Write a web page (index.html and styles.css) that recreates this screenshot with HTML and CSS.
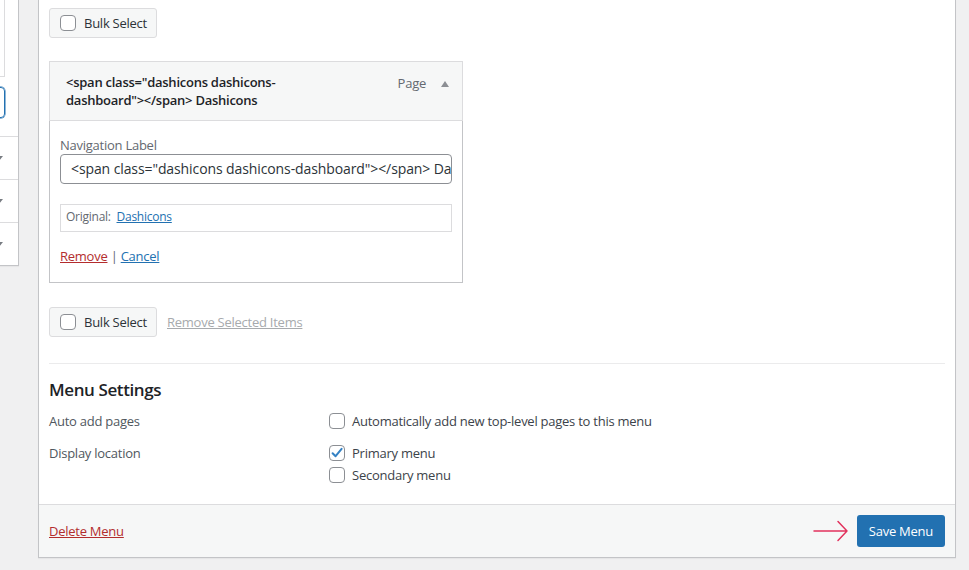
FILE: index.html
```html
<!DOCTYPE html>
<html>
<head>
<meta charset="utf-8">
<link rel="stylesheet" href="styles.css">
</head>
<body>
<div class="page">
  <aside class="side">
    <div class="side-list"></div>
    <div class="side-search"></div>
    <div class="side-rows">
      <div class="side-row"><span class="side-tri"></span></div>
      <div class="side-row"><span class="side-tri"></span></div>
      <div class="side-row"><span class="side-tri"></span></div>
    </div>
  </aside>
  <main class="panel">
    <div class="panel-body">
      <div class="bulk-row bulk-top">
        <label class="btn"><span class="cb"></span>Bulk Select</label>
      </div>
      <div class="item">
        <div class="item-handle">
          <span class="item-title">&lt;span class="dashicons dashicons-dashboard"&gt;&lt;/span&gt; Dashicons</span>
          <span class="item-type">Page</span>
          <span class="item-tri"></span>
        </div>
        <div class="item-settings">
          <div class="field-label">Navigation Label</div>
          <div class="text-input">&lt;span class="dashicons dashicons-dashboard"&gt;&lt;/span&gt; Dashicons</div>
          <div class="original">Original:&nbsp; <a class="link" href="#">Dashicons</a></div>
          <div class="actions"><a class="link-red" href="#">Remove</a> <span class="sep">|</span> <a class="link" href="#">Cancel</a></div>
        </div>
      </div>
      <div class="bulk-row bulk-bottom">
        <label class="btn"><span class="cb"></span>Bulk Select</label>
        <a class="link-muted" href="#">Remove Selected Items</a>
      </div>
      <section class="settings">
        <h3 class="settings-title">Menu Settings</h3>
        <div class="settings-group">
          <div class="group-name">Auto add pages</div>
          <div class="group-input">
            <div class="check-line"><span class="cb"></span>Automatically add new top-level pages to this menu</div>
          </div>
        </div>
        <div class="settings-group">
          <div class="group-name">Display location</div>
          <div class="group-input">
            <div class="check-line"><span class="cb checked"><svg viewBox="0 0 16 16" width="16" height="16"><path d="M3.6 8.2 L6.6 11.2 L12.6 3.8" fill="none" stroke="#3582c4" stroke-width="2" stroke-linecap="round" stroke-linejoin="round"/></svg></span>Primary menu</div>
            <div class="check-line"><span class="cb"></span>Secondary menu</div>
          </div>
        </div>
      </section>
    </div>
    <div class="panel-footer">
      <a class="link-red" href="#">Delete Menu</a>
      <div class="save-wrap">
        <svg class="arrow" width="36" height="22" viewBox="0 0 36 22"><path d="M1 11 H34 M25 1.5 L34 11 L25 20.5" fill="none" stroke="#e2325d" stroke-width="1.5" stroke-linecap="round" stroke-linejoin="round"/></svg>
        <span class="btn-primary">Save Menu</span>
      </div>
    </div>
  </main>
</div>
</body>
</html>
```
FILE: styles.css
```css
* { box-sizing: border-box; }
html, body { margin: 0; padding: 0; }
body {
  background: #f0f0f1;
  font-family: "Open Sans", "Noto Sans", sans-serif;
  font-size: 13px;
  letter-spacing: -0.25px;
  color: #3c434a;
  width: 969px;
  height: 570px;
  overflow: hidden;
}
.page {
  display: flex;
  align-items: flex-start;
  gap: 19px;
}
.side {
  width: 19px;
  height: 266px;
  background: #fff;
  border-right: 1px solid #c3c4c7;
  border-bottom: 1px solid #c3c4c7;
  box-shadow: 0 1px 1px rgba(0,0,0,.04);
  overflow: hidden;
  display: flex;
  flex-direction: column;
}
.side-list {
  width: 200px;
  margin-left: -195px;
  height: 77px;
  border: 1px solid #dcdcde;
  border-top: none;
  flex: none;
}
.side-search {
  width: 200px;
  margin-left: -195px;
  margin-top: 10px;
  height: 31px;
  border: 1px solid #2271b1;
  border-radius: 4px;
  box-shadow: 0 0 0 0.5px #2271b1;
  flex: none;
}
.side-rows { margin-top: 18px; }
.side-row {
  height: 43px;
  border-top: 1px solid #dcdcde;
  display: flex;
  align-items: center;
}
.side-row:last-child { height: 44px; }
.side-tri {
  width: 0; height: 0;
  margin-left: -5px;
  border-left: 4px solid transparent;
  border-right: 4px solid transparent;
  border-top: 5px solid #787c82;
}
.panel {
  width: 918px;
  background: #fff;
  border: 1px solid #c3c4c7;
  border-top: none;
  box-shadow: 0 1px 1px rgba(0,0,0,.04);
}
.panel-body { padding: 8px 10px 0; }
.bulk-row { display: flex; align-items: center; gap: 10px; }
.btn {
  display: inline-flex;
  align-items: center;
  height: 30px;
  padding: 0 0 0 10px;
  background: #f6f7f7;
  border: 1px solid #dcdcde;
  border-radius: 3px;
  color: #2c3338;
  font-size: 13px;
  width: 108px;
  white-space: nowrap;
}
.cb {
  width: 16px; height: 16px;
  border: 1px solid #8c8f94;
  border-radius: 4px;
  background: #fff;
  margin-right: 8px;
  flex: none;
  display: inline-flex;
  align-items: center;
  justify-content: center;
}
.cb svg { display: block; margin: -1px; }
.item {
  width: 414px;
  margin-top: 23px;
}
.item-handle {
  display: flex;
  align-items: flex-start;
  background: #f6f7f7;
  border: 1px solid #dcdcde;
  padding: 11px 0 11px 16px;
  height: 60px;
}
.item-title {
  width: 262px;
  font-weight: 600;
  font-size: 13px;
  line-height: 18px;
  color: #1d2327;
}
.item-type {
  margin-left: auto;
  color: #646970;
  line-height: 21px;
}
.item-tri {
  margin: 8px 13px 0 15px;
  width: 0; height: 0;
  border-left: 4px solid transparent;
  border-right: 4px solid transparent;
  border-bottom: 6px solid #8c8f94;
}
.item-settings {
  border: 1px solid #c3c4c7;
  border-top: none;
  padding: 15px 10px 17px;
}
.field-label { color: #646970; line-height: 18px; }
.text-input {
  height: 30px;
  border: 1px solid #8c8f94;
  border-radius: 4px;
  padding: 0 10px;
  font-size: 14px;
  letter-spacing: -0.1px;
  line-height: 28px;
  color: #2c3338;
  white-space: nowrap;
  overflow: hidden;
}
.original {
  margin-top: 20px;
  border: 1px solid #dcdcde;
  padding: 3px 5px 5px;
  font-size: 12px;
  line-height: 18px;
  color: #646970;
}
.actions { margin-top: 15px; line-height: 18px; }
.link { color: #2271b1; text-decoration: underline; }
.link-red { color: #b32d2e; text-decoration: underline; }
.sep { color: #646970; }
.link-muted { color: #a7aaad; text-decoration: underline; }
.bulk-bottom { margin-top: 24px; }
.settings {
  margin-top: 26px;
  border-top: 1px solid #ebebec;
  padding-bottom: 8px;
}
.settings-title {
  margin: 14px 0 8px;
  font-size: 17px;
  letter-spacing: -0.4px;
  font-weight: 600;
  line-height: 24px;
  color: #1d2327;
}
.settings-group { display: flex; margin-bottom: 10px; }
.settings-group + .settings-group { margin-top: 1px; }
.group-name { width: 280px; flex: none; line-height: 22px; color: #50575e; }
.group-input { display: flex; flex-direction: column; }
.check-line {
  display: flex;
  align-items: center;
  line-height: 22px;
  height: 22px;
  color: #3c434a;
}
.check-line .cb { margin-right: 7px; }
.panel-footer {
  height: 53px;
  background: #f6f7f7;
  border-top: 1px solid #dcdcde;
  display: flex;
  align-items: center;
  justify-content: space-between;
  padding: 0 10px;
}
.save-wrap { display: flex; align-items: center; gap: 8px; }
.arrow { display: block; }
.btn-primary {
  display: inline-flex;
  align-items: center;
  height: 32px;
  padding: 0 12px;
  background: #2271b1;
  border-radius: 3px;
  color: #fff;
  font-size: 13px;
}
```
